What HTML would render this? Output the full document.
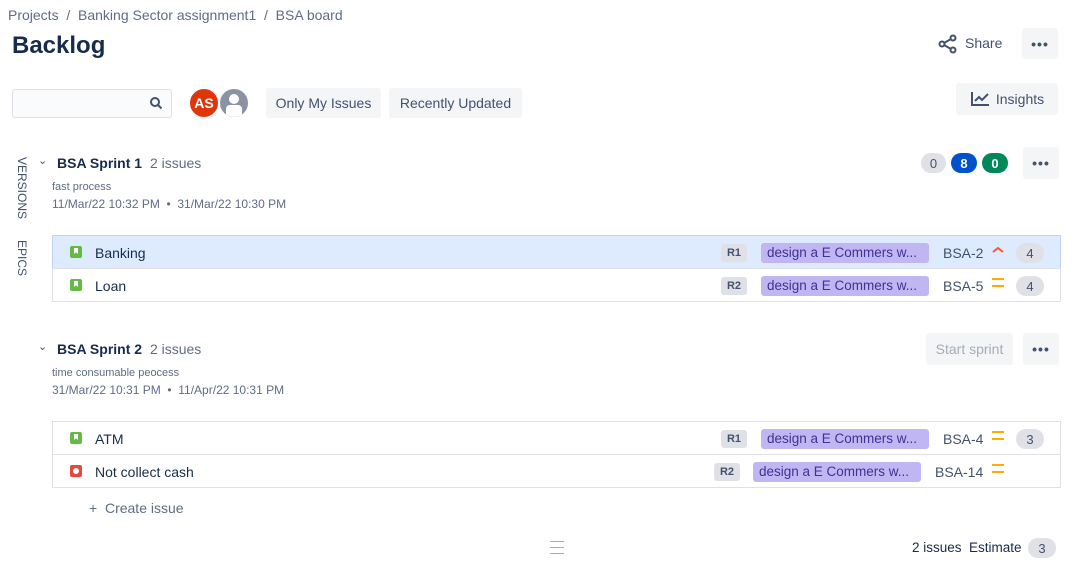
<!DOCTYPE html>
<html><head><meta charset="utf-8"><style>
*{box-sizing:border-box;margin:0;padding:0}
body{width:1075px;height:562px;overflow:hidden;background:#fff;font-family:"Liberation Sans",sans-serif;color:#172b4d;position:relative;font-size:14px}
.a{position:absolute;white-space:nowrap}
.btn{position:absolute;background:#f4f5f7;border-radius:3px;display:flex;align-items:center;justify-content:center;font-size:14px;color:#42526e}
.dots{font-weight:bold;letter-spacing:1px;font-size:14px;color:#42526e}
.pill{position:absolute;height:20px;border-radius:10px;font-size:13px;display:flex;align-items:center;justify-content:center}
.row{position:absolute;left:52px;width:1009px;height:34px;border:1px solid #dfe1e6}
.lbl{position:absolute;height:18px;width:26px;background:#dfe1e6;border-radius:3px;font-size:11px;font-weight:bold;color:#42526e;display:flex;align-items:center;justify-content:center}
.epic{position:absolute;height:20px;width:168px;background:#c0b6f2;border-radius:3px;font-size:13.5px;color:#403294;padding-left:6px;line-height:20px;overflow:hidden}
.key{position:absolute;font-size:14px;color:#42526e}
.story{position:absolute;left:17px;top:10px;width:12px;height:12px;background:#65ba43;border-radius:2px}
.story:after{content:"";position:absolute;left:4px;top:2px;width:4px;height:6px;background:#fff;clip-path:polygon(0 0,100% 0,100% 100%,50% 70%,0 100%)}
.med{position:absolute;width:12px;height:9px;border-top:2px solid #ffab00;border-bottom:2px solid #ffab00}
</style></head><body>
<div class="a" style="left:8px;top:7px;font-size:14px;color:#5e6c84">Projects &nbsp;/&nbsp; Banking Sector assignment1 &nbsp;/&nbsp; BSA board</div>
<div class="a" style="left:12px;top:32px;font-size:24px;font-weight:bold;color:#172b4d">Backlog</div>
<svg class="a" style="left:938px;top:34px" width="20" height="20" viewBox="0 0 20 20" fill="none" stroke="#42526e" stroke-width="2"><circle cx="15" cy="4" r="2.5"/><circle cx="4" cy="10" r="2.5"/><circle cx="15" cy="16" r="2.5"/><path d="M6 9 13 5M6 11 13 15"/></svg>
<div class="a" style="left:965px;top:35px;font-size:14px;color:#42526e">Share</div>
<div class="btn" style="left:1022px;top:28px;width:36px;height:31px"><span class="dots">•••</span></div>

<div class="a" style="left:12px;top:89px;width:160px;height:29px;border:1px solid #dfe1e6;background:#fafbfc;border-radius:3px"></div>
<svg class="a" style="left:149px;top:96px" width="14" height="14" viewBox="0 0 14 14" fill="none" stroke="#42526e" stroke-width="2"><circle cx="6" cy="6" r="4"/><path d="M9 9l3.5 3.5"/></svg>
<div class="a" style="left:188px;top:87px;width:32px;height:32px;border-radius:50%;background:#de350b;border:2px solid #fff;color:#fff;font-size:14px;font-weight:bold;display:flex;align-items:center;justify-content:center">AS</div>
<div class="a" style="left:218px;top:87px;width:32px;height:32px;border-radius:50%;background:#8993a4;border:2px solid #fff;overflow:hidden"><div style="position:absolute;left:9px;top:5px;width:10px;height:10px;border-radius:50%;background:#fff"></div><div style="position:absolute;left:6px;top:16px;width:16px;height:12px;border-radius:4px 4px 0 0;background:#fff"></div></div>
<div class="btn" style="left:266px;top:88px;width:115px;height:30px">Only My Issues</div>
<div class="btn" style="left:389px;top:88px;width:133px;height:30px">Recently Updated</div>
<div class="btn" style="left:956px;top:83px;width:102px;height:32px"><svg width="20" height="16" viewBox="0 0 20 16" fill="none" stroke="#42526e" stroke-width="2" style="margin-right:6px"><path d="M2 1v13h17M5 10l4-4 3 3 6-6"/></svg>Insights</div>

<div class="a" style="left:13px;top:157px;font-size:12px;color:#42526e;transform-origin:0 0;transform:translate(16px,0) rotate(90deg)">VERSIONS</div>
<div class="a" style="left:13px;top:240px;font-size:12px;color:#42526e;transform-origin:0 0;transform:translate(16px,0) rotate(90deg)">EPICS</div>

<div class="a" style="left:38px;top:154px;font-size:11px;color:#42526e">⌄</div>
<div class="a" style="left:57px;top:155px;font-size:14px;font-weight:bold">BSA Sprint 1 <span style="font-weight:normal;color:#5e6c84;margin-left:4px">2 issues</span></div>
<div class="a" style="left:52px;top:181px;font-size:11px;color:#5e6c84">fast process</div>
<div class="a" style="left:52px;top:197px;font-size:12px;color:#5e6c84">11/Mar/22 10:32 PM &nbsp;•&nbsp; 31/Mar/22 10:30 PM</div>
<div class="pill" style="left:921px;top:153px;width:25px;background:#dfe1e6;color:#42526e">0</div>
<div class="pill" style="left:951px;top:153px;width:26px;background:#0052cc;color:#fff;font-weight:bold">8</div>
<div class="pill" style="left:982px;top:153px;width:26px;background:#00875a;color:#fff;font-weight:bold">0</div>
<div class="btn" style="left:1023px;top:147px;width:36px;height:32px"><span class="dots">•••</span></div>

<div class="row" style="top:235px;background:#deebff;border-color:#c1d5f0"><div class="story"></div><div class="a" style="left:42px;top:9px">Banking</div>
<div class="lbl" style="left:668px;top:8px">R1</div><div class="epic" style="left:708px;top:7px">design a E Commers w...</div><div class="key" style="left:890px;top:9px">BSA-2</div>
<svg class="a" style="left:938px;top:9px" width="14" height="10" viewBox="0 0 14 10" fill="none" stroke="#ff5630" stroke-width="2"><path d="M2 7l5-4 5 4"/></svg>
<div class="pill" style="left:963px;top:7px;width:28px;background:#dfe1e6;color:#42526e">4</div></div>
<div class="row" style="top:268px"><div class="story"></div><div class="a" style="left:42px;top:9px">Loan</div>
<div class="lbl" style="left:668px;top:8px">R2</div><div class="epic" style="left:708px;top:7px">design a E Commers w...</div><div class="key" style="left:890px;top:9px">BSA-5</div>
<div class="med" style="left:939px;top:9px"></div>
<div class="pill" style="left:963px;top:7px;width:28px;background:#dfe1e6;color:#42526e">4</div></div>

<div class="a" style="left:38px;top:340px;font-size:11px;color:#42526e">⌄</div>
<div class="a" style="left:57px;top:341px;font-size:14px;font-weight:bold">BSA Sprint 2 <span style="font-weight:normal;color:#5e6c84;margin-left:4px">2 issues</span></div>
<div class="a" style="left:52px;top:367px;font-size:11px;color:#5e6c84">time consumable peocess</div>
<div class="a" style="left:52px;top:383px;font-size:12px;color:#5e6c84">31/Mar/22 10:31 PM &nbsp;•&nbsp; 11/Apr/22 10:31 PM</div>
<div class="btn" style="left:926px;top:333px;width:87px;height:32px;color:#a5adba">Start sprint</div>
<div class="btn" style="left:1023px;top:333px;width:36px;height:32px"><span class="dots">•••</span></div>

<div class="row" style="top:421px"><div class="story"></div><div class="a" style="left:42px;top:9px">ATM</div>
<div class="lbl" style="left:668px;top:8px">R1</div><div class="epic" style="left:708px;top:7px">design a E Commers w...</div><div class="key" style="left:890px;top:9px">BSA-4</div>
<div class="med" style="left:939px;top:9px"></div>
<div class="pill" style="left:963px;top:7px;width:28px;background:#dfe1e6;color:#42526e">3</div></div>
<div class="row" style="top:454px"><div class="a" style="left:17px;top:10px;width:12px;height:12px;background:#e5493a;border-radius:2px"><div style="position:absolute;left:3px;top:3px;width:6px;height:6px;border-radius:50%;background:#fff"></div></div><div class="a" style="left:42px;top:9px">Not collect cash</div>
<div class="lbl" style="left:661px;top:8px">R2</div><div class="epic" style="left:700px;top:7px">design a E Commers w...</div><div class="key" style="left:882px;top:9px">BSA-14</div>
<div class="med" style="left:939px;top:9px"></div></div>

<div class="a" style="left:89px;top:500px;font-size:14px;color:#5e6c84">+ &nbsp;Create issue</div>
<div class="a" style="left:550px;top:541px;width:14px;height:13px;border-top:1px solid #a5adba;border-bottom:1px solid #a5adba"><div style="position:absolute;left:0;top:5px;width:14px;height:1px;background:#a5adba"></div></div>
<div class="a" style="left:912px;top:540px;font-size:13.5px;color:#172b4d">2 issues &nbsp;Estimate</div>
<div class="pill" style="left:1028px;top:538px;width:28px;background:#dfe1e6;color:#42526e">3</div>
</body></html>
